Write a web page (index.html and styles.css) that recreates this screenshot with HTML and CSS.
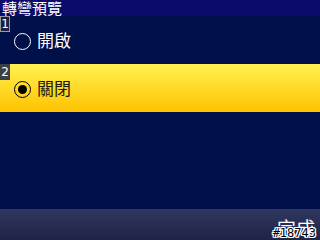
FILE: index.html
```html
<!DOCTYPE html>
<html>
<head>
<meta charset="utf-8">
<link rel="stylesheet" href="styles.css">
</head>
<body>
<div class="screen">
  <div class="title">轉彎預覽</div>
  <div class="list">
    <div class="item">
      <span class="idx">1</span>
      <span class="radio"></span>
      <span class="label">開啟</span>
    </div>
    <div class="item selected">
      <span class="idx">2</span>
      <span class="radio on"></span>
      <span class="label">關閉</span>
    </div>
  </div>
  <div class="softbar">
    <span class="soft">完成</span>
  </div>
  <span class="tag">#18743</span>
</div>
</body>
</html>
```
FILE: styles.css
```css
html, body {
  margin: 0;
  padding: 0;
}
body {
  width: 320px;
  height: 240px;
  overflow: hidden;
  background: #001048;
}
.screen {
  position: relative;
  width: 320px;
  height: 240px;
  display: flex;
  flex-direction: column;
  background: #001048;
  font-family: "Liberation Sans", "Noto Sans CJK TC", sans-serif;
}
.title {
  height: 16px;
  line-height: 16px;
  background: #0b0b6c;
  color: #ffffff;
  font-size: 15px;
  padding-left: 2px;
  font-family: "Noto Sans CJK TC", sans-serif;
}
.list {
  flex: 1;
  display: flex;
  flex-direction: column;
}
.item {
  position: relative;
  height: 48px;
  display: flex;
  align-items: center;
  padding-left: 14px;
  color: #ffffff;
}
.item.selected {
  background: linear-gradient(#fff250, #ffc200);
  color: #1a1a10;
}
.idx {
  position: absolute;
  left: 0;
  top: 0;
  width: 8px;
  height: 14px;
  border: 1px solid #9a9a9a;
  background: #1a2040;
  color: #ffffff;
  font-size: 12px;
  line-height: 14px;
  text-align: center;
  font-family: "DejaVu Sans", sans-serif;
}
.selected .idx {
  background: #3a4046;
  border-color: #3a4046;
}
.radio {
  width: 15px;
  height: 15px;
  border: 1.5px solid #ffffff;
  border-radius: 50%;
  box-sizing: content-box;
  margin-top: 2px;
  position: relative;
}
.radio.on {
  border-color: #000000;
}
.radio.on::after {
  content: "";
  position: absolute;
  left: 3px;
  top: 3px;
  width: 9px;
  height: 9px;
  border-radius: 50%;
  background: #000000;
}
.label {
  margin-left: 6px;
  font-size: 17px;
  font-family: "Noto Sans CJK TC", sans-serif;
  line-height: 20px;
}
.softbar {
  height: 31px;
  background: linear-gradient(#30375f, #1e2446);
  display: flex;
  justify-content: flex-end;
  align-items: flex-end;
  padding-right: 5px;
}
.soft {
  color: #ffffff;
  font-size: 19px;
  line-height: 24px;
  font-family: "Noto Sans CJK TC", sans-serif;
}
.tag {
  position: absolute;
  right: 4px;
  bottom: 0;
  font-family: "DejaVu Sans Mono", monospace;
  font-size: 12px;
  line-height: 14px;
  color: #000000;
  text-shadow: 1px 0 0 #fff, -1px 0 0 #fff, 0 1px 0 #fff, 0 -1px 0 #fff, 1px 1px 0 #fff, -1px -1px 0 #fff, 1px -1px 0 #fff, -1px 1px 0 #fff;
}
```
